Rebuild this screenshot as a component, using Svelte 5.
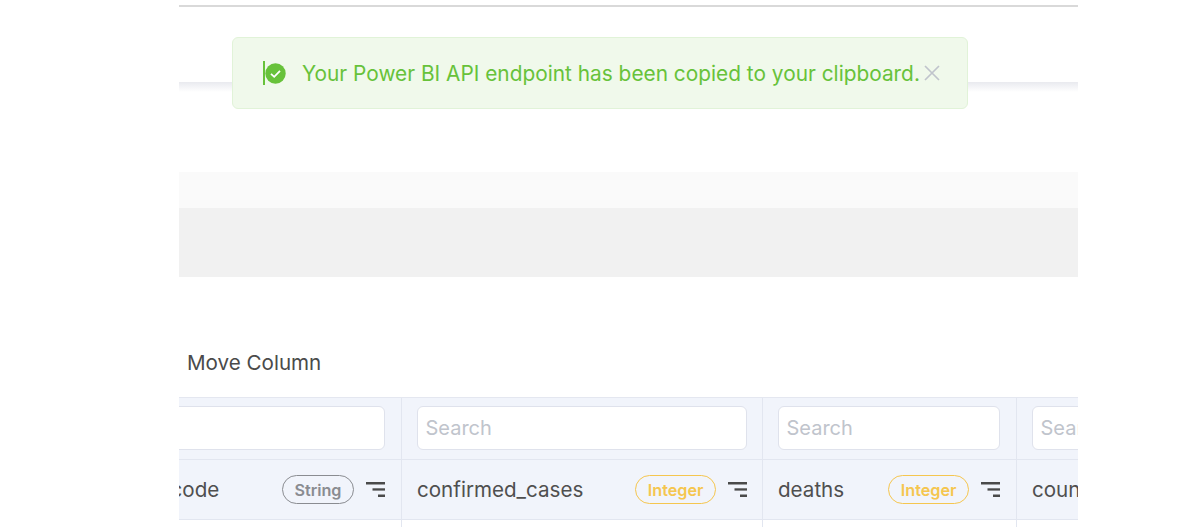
<script>
  const columns = [
    { name: 'country_code', type: 'String', kind: 'str' },
    { name: 'confirmed_cases', type: 'Integer', kind: 'int' },
    { name: 'deaths', type: 'Integer', kind: 'int' },
    { name: 'country', type: 'String', kind: 'str' }
  ];
</script>

<div class="page">
  <div class="sheet">
    <div class="rule"></div>
    <div class="head-space"></div>
    <div class="shadow"></div>
    <div class="gap-a"></div>
    <div class="band-light"></div>
    <div class="band-dark"></div>
    <div class="toolbar"><span>Move Column</span></div>
    <div class="table">
      {#each columns as col}
        <div class="col">
          <div class="cell search"><input placeholder="Search" /></div>
          <div class="cell title">
            <span class="name">{col.name}</span>
            <span class="badge {col.kind}">{col.type}</span>
            <svg class="filter" width="19" height="15" viewBox="0 0 19 15" aria-hidden="true">
              <rect x="0" y="0" width="19" height="2.5" />
              <rect x="6.5" y="6.3" width="12.5" height="2.3" />
              <rect x="12" y="12.5" width="7" height="2.5" />
            </svg>
          </div>
          <div class="cell body"></div>
        </div>
      {/each}
    </div>
  </div>

  <div class="toast">
    <span class="bar"></span>
    <svg class="ok" width="21" height="21" viewBox="0 0 21 21" aria-hidden="true">
      <circle cx="10.5" cy="10.5" r="10.2" fill="#67c23a" />
      <path d="M6 10.8l3.2 3 5.8-6" fill="none" stroke="#fff" stroke-width="1.8" />
    </svg>
    <p>Your Power BI API endpoint has been copied to your clipboard.</p>
    <svg class="close" width="16" height="16" viewBox="0 0 16 16" aria-hidden="true">
      <path d="M1 1l14 14M15 1L1 15" fill="none" stroke="#c0c4cc" stroke-width="1.7" />
    </svg>
  </div>
</div>

<style>
  :global(body) {
    margin: 0;
    background: #fff;
  }
  .page {
    position: relative;
    width: 1202px;
    height: 527px;
    overflow: hidden;
    font-family: Inter, "Liberation Sans", sans-serif;
  }
  .sheet {
    width: 899px;
    height: 527px;
    margin-left: 179px;
    padding-top: 5px;
    box-sizing: border-box;
    overflow: hidden;
  }
  .rule {
    height: 2px;
    background: #d9d9d9;
  }
  .head-space {
    height: 75px;
  }
  .shadow {
    height: 10px;
    background: linear-gradient(#e9eaef, #fff);
  }
  .gap-a {
    height: 80px;
  }
  .band-light {
    height: 36px;
    background: #fafafa;
  }
  .band-dark {
    height: 69px;
    background: #f1f1f1;
  }
  .toolbar {
    height: 120px;
    display: flex;
    align-items: flex-end;
    padding: 0 0 20px 8px;
    box-sizing: border-box;
    font-size: 20.6px;
    line-height: 28px;
    color: #4a4a4a;
  }
  .table {
    display: grid;
    grid-template-columns: 329px 361px 254px 254px;
    width: 1198px;
    margin-left: -106px;
    border-top: 1px solid #e4e7f0;
  }
  .col {
    display: flex;
    flex-direction: column;
  }
  .cell {
    box-sizing: border-box;
    border-right: 1px solid #e2e6f0;
    padding: 0 15px;
    display: flex;
    align-items: center;
  }
  .col:nth-child(odd) .cell {
    padding-right: 16px;
  }
  .search {
    height: 62px;
    background: #f1f4fb;
    border-bottom: 1px solid #e2e6f0;
  }
  input {
    width: 100%;
    height: 44px;
    box-sizing: border-box;
    margin-top: -1px;
    padding: 0 7.5px;
    border: 1px solid #dfe2ec;
    border-radius: 6px;
    background: #fff;
    font: inherit;
    font-size: 20px;
    outline: none;
  }
  input::placeholder {
    color: #c0c4cc;
    opacity: 1;
  }
  .title {
    height: 60px;
    background: #f1f4fb;
    border-bottom: 1px solid #e2e6f0;
    font-size: 20.6px;
    color: #4f4f4f;
  }
  .name {
    flex: 1;
    white-space: nowrap;
  }
  .badge {
    box-sizing: border-box;
    height: 29px;
    margin-right: 12px;
    border: 1px solid;
    border-radius: 15px;
    font-size: 16.2px;
    font-weight: 600;
    line-height: 28px;
  }
  .str {
    padding: 0 11.5px;
    color: #8a8c91;
    border-color: #8a8c91;
  }
  .int {
    padding: 0 11.5px;
    color: #f5c64f;
    border-color: #f5c64f;
  }
  .filter {
    flex: none;
    fill: #4a4a4a;
  }
  .body {
    height: 20px;
    background: #fff;
  }
  .toast {
    position: absolute;
    left: 232px;
    top: 37px;
    width: 736px;
    height: 72px;
    box-sizing: border-box;
    display: flex;
    align-items: center;
    padding-left: 30px;
    background: #f0f9eb;
    border: 1px solid #e1f3d8;
    border-radius: 6px;
  }
  .bar {
    width: 2px;
    height: 24px;
    background: #67c23a;
    flex: none;
  }
  .ok {
    flex: none;
  }
  .toast p {
    margin: 2px 0 0 16px;
    font-size: 20.85px;
    line-height: 28px;
    color: #67c23a;
    white-space: nowrap;
  }
  .close {
    flex: none;
    margin-left: 4px;
  }
</style>
